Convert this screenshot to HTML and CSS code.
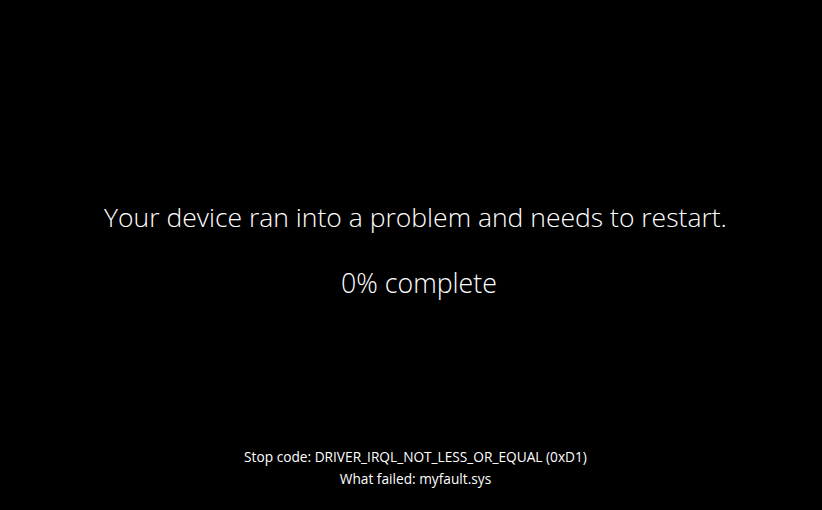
FILE: index.html
```html
<!DOCTYPE html>
<html lang="en">
<head>
<meta charset="utf-8">
<title>Stop</title>
<link rel="stylesheet" href="styles.css">
</head>
<body>
<div class="screen">
  <div class="main">
    <div class="title">Your device ran into a problem and needs to restart.</div>
    <div class="progress">0% complete</div>
  </div>
  <div class="details">
    <div class="line">Stop code: DRIVER_IRQL_NOT_LESS_OR_EQUAL (0xD1)</div>
    <div class="line">What failed: myfault.sys</div>
  </div>
</div>
</body>
</html>
```
FILE: styles.css
```css
html, body {
  margin: 0;
  padding: 0;
  background: #000;
}
.screen {
  width: 822px;
  height: 510px;
  background: #000;
  color: #fff;
  font-family: "Open Sans", "Noto Sans", sans-serif;
  display: flex;
  flex-direction: column;
  align-items: center;
  box-sizing: border-box;
  padding: 199px 0 20px 9px;
}
.main {
  display: flex;
  flex-direction: column;
  align-items: center;
  gap: 28px;
}
.title {
  font-size: 26.5px;
  font-weight: 300;
  line-height: 37px;
  white-space: nowrap;
}
.progress {
  font-size: 26.7px;
  font-weight: 300;
  line-height: 37px;
  margin-left: 7px;
}
.details {
  margin-top: auto;
  display: flex;
  flex-direction: column;
  align-items: center;
}
.line {
  font-size: 13.7px;
  font-weight: 400;
  line-height: 22px;
  white-space: nowrap;
}
```
